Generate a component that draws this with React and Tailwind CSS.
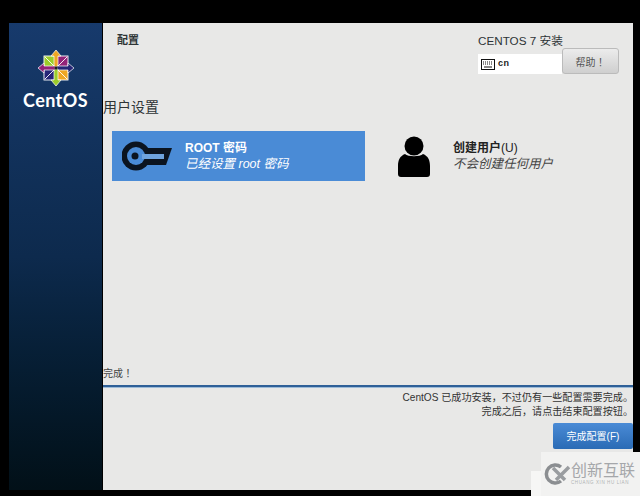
import React from "react";

const FONT = "font-['Liberation_Sans','Noto_Sans_CJK_SC',sans-serif]";

// CentOS pinwheel logo
const CentosLogo = () => (
  <svg width="36" height="36" viewBox="0 0 36 36">
    <rect x="6" y="6" width="11" height="11" fill="#9ccd2a" stroke="#fff" strokeWidth="0.9" />
    <rect x="19" y="6" width="11" height="11" fill="#932279" stroke="#fff" strokeWidth="0.9" />
    <rect x="19" y="19" width="11" height="11" fill="#efa724" stroke="#fff" strokeWidth="0.9" />
    <rect x="6" y="19" width="11" height="11" fill="#262577" stroke="#fff" strokeWidth="0.9" />
    <path d="M7 7l10 10M29 7L19 17M29 29L19 19M7 29l10-10" stroke="#fff" strokeWidth="0.9" />
    <path d="M18 0l5 6h-3v11h-4V6h-3z" fill="#efa724" stroke="#fff" strokeWidth="0.7" />
    <path d="M36 18l-6 5v-3H19v-4h11v-3z" fill="#262577" stroke="#fff" strokeWidth="0.7" />
    <path d="M18 36l-5-6h3V19h4v11h3z" fill="#9ccd2a" stroke="#fff" strokeWidth="0.7" />
    <path d="M0 18l6-5v3h11v4H6v3z" fill="#932279" stroke="#fff" strokeWidth="0.7" />
    <rect x="16.5" y="16.5" width="3" height="3" fill="#222" />
  </svg>
);

const KeyIcon = () => (
  <svg width="50" height="30" viewBox="0 0 50 30">
    <circle cx="14" cy="15" r="14.5" fill="#0b1420" />
    <path d="M22 7h28l-6 17H22z" fill="#0b1420" />
    <circle cx="14" cy="15" r="9" fill="#4a8bd6" />
    <rect x="20" y="13" width="22" height="5" fill="#6ea3de" />
    <circle cx="13" cy="15" r="3.5" fill="#0b1420" />
  </svg>
);

const UserIcon = () => (
  <svg width="32" height="41" viewBox="0 0 32 41">
    <circle cx="16" cy="10" r="9.5" fill="#000" />
    <path d="M7 18c3 3 15 3 18 0 5 2 7 6 7 12v8c0 2-1 3-3 3H3c-2 0-3-1-3-3v-8c0-6 2-10 7-12z" fill="#000" />
  </svg>
);

const KeyboardIcon = () => (
  <svg width="14" height="11" viewBox="0 0 14 11">
    <rect x="0.5" y="0.5" width="13" height="10" fill="none" stroke="#111" />
    <path d="M2 3h10M2 5h10" stroke="#111" strokeDasharray="1 1" />
    <path d="M3 8h8" stroke="#111" />
  </svg>
);

const Spoke = ({ icon, title, subtitle, selected, iconClass }) => (
  <div
    className={`w-[253px] h-[50px] flex items-center ${selected ? "bg-[#4a8bd6] text-white" : "text-[#222]"}`}
  >
    <div className={`w-[73px] flex justify-center ${iconClass}`}>{icon}</div>
    <div className="flex flex-col">
      <span className="text-[12px] leading-[16px] font-bold">{title}</span>
      <span className={`text-[12.5px] leading-[16px] italic ${selected ? "" : "text-[#444]"}`}>{subtitle}</span>
    </div>
  </div>
);

const App = () => {
  return (
    <div className={`relative w-[640px] h-[496px] bg-black overflow-hidden pt-[23px] pl-[9px] pr-[8px] pb-[6px] flex ${FONT}`}>
      {/* sidebar */}
      <div className="w-[93px] shrink-0 flex flex-col items-center pt-[27px] bg-gradient-to-b from-[#173a6c] via-[#0d2a4d] to-[#021018]">
        <CentosLogo />
        <span className="mt-[4px] text-[18px] leading-[20px] font-bold text-white font-['Lato',sans-serif] tracking-[0.4px]">
          CentOS
        </span>
      </div>

      {/* main panel */}
      <div className="flex-1 ml-px bg-[#e8e8e7] flex flex-col text-[#2e3436]">
        <div className="h-[52px] flex justify-between pl-[14px] pr-[14px] pt-[9px]">
          <span className="text-[11px] leading-[16px] font-bold">配置</span>
          <div className="flex flex-col">
            <span className="text-[11.7px] leading-[16px] pt-px">CENTOS 7 安装</span>
            <div className="flex items-end -mt-[1px]">
              <div className="w-[84px] h-[20px] bg-white flex items-center pl-[3px] gap-[3px]">
                <KeyboardIcon />
                <span className="text-[9px] font-bold text-[#222] tracking-[0.5px]">cn</span>
              </div>
              <button className="w-[57px] h-[26px] rounded-[3px] border border-[#bbb] bg-gradient-to-b from-[#ececec] to-[#cfcfcf] text-[10px] text-[#555] font-['Noto_Sans_CJK_TC',sans-serif]">
                帮助！
              </button>
            </div>
          </div>
        </div>

        <div className="mt-[22px] text-[14px] leading-[20px]">用户设置</div>

        <div className="mt-[14px] pl-[9px] flex gap-[15px]">
          <Spoke selected icon={<KeyIcon />} iconClass="pr-[4px]" title="ROOT 密码" subtitle="已经设置 root 密码" />
          <Spoke
            icon={<UserIcon />}
            iconClass="pr-[5px]"
            title={<>创建用户<span className="font-normal">(U)</span></>}
            subtitle="不会创建任何用户"
          />
        </div>

        <div className="mt-auto text-[10px] leading-[14px] text-[#444] font-['Noto_Sans_CJK_TC',sans-serif]">完成！</div>
        <div className="mt-[5px] h-[3px] bg-[#2f6098] border-b border-[#9dbbd8]" />

        <div className="pt-[3px] text-right text-[10.1px] leading-[13.5px] text-[#333]">
          <p>CentOS 已成功安装，不过仍有一些配置需要完成。</p>
          <p>完成之后，请点击结束配置按钮。</p>
        </div>
        <div className="flex justify-end mt-[5px] mb-[41px]">
          <button className="w-[80px] h-[26px] rounded-[2px] bg-gradient-to-b from-[#4a8bd6] to-[#2a6bb5] text-white text-[10px]">
            完成配置(F)
          </button>
        </div>
      </div>

      {/* watermark */}
      <div className="absolute right-0 bottom-0 w-[99px] h-[44px] bg-[#f2f2f1] flex items-center gap-0 pl-[3px]">
        <svg width="27" height="22" viewBox="0 0 27 22">
          <path d="M17 4a9 9 0 1 0 0 14" fill="none" stroke="#8b8e91" strokeWidth="3.5" />
          <path d="M9 5l12 12M25 4L12 17" fill="none" stroke="#9a9da0" strokeWidth="3.5" />
        </svg>
        <div className="flex flex-col">
          <span className="text-[16px] leading-[18px] text-[#a5a7aa]">创新互联</span>
          <span className="text-[4.5px] leading-[6px] text-[#b0b2b4] tracking-[0.6px] whitespace-nowrap">CHUANG XIN HU LIAN</span>
        </div>
      </div>
      <div className="absolute left-[531px] bottom-0 w-[10px] h-[25px] bg-[#f6f6f5]" />
    </div>
  );
};

export default App;
